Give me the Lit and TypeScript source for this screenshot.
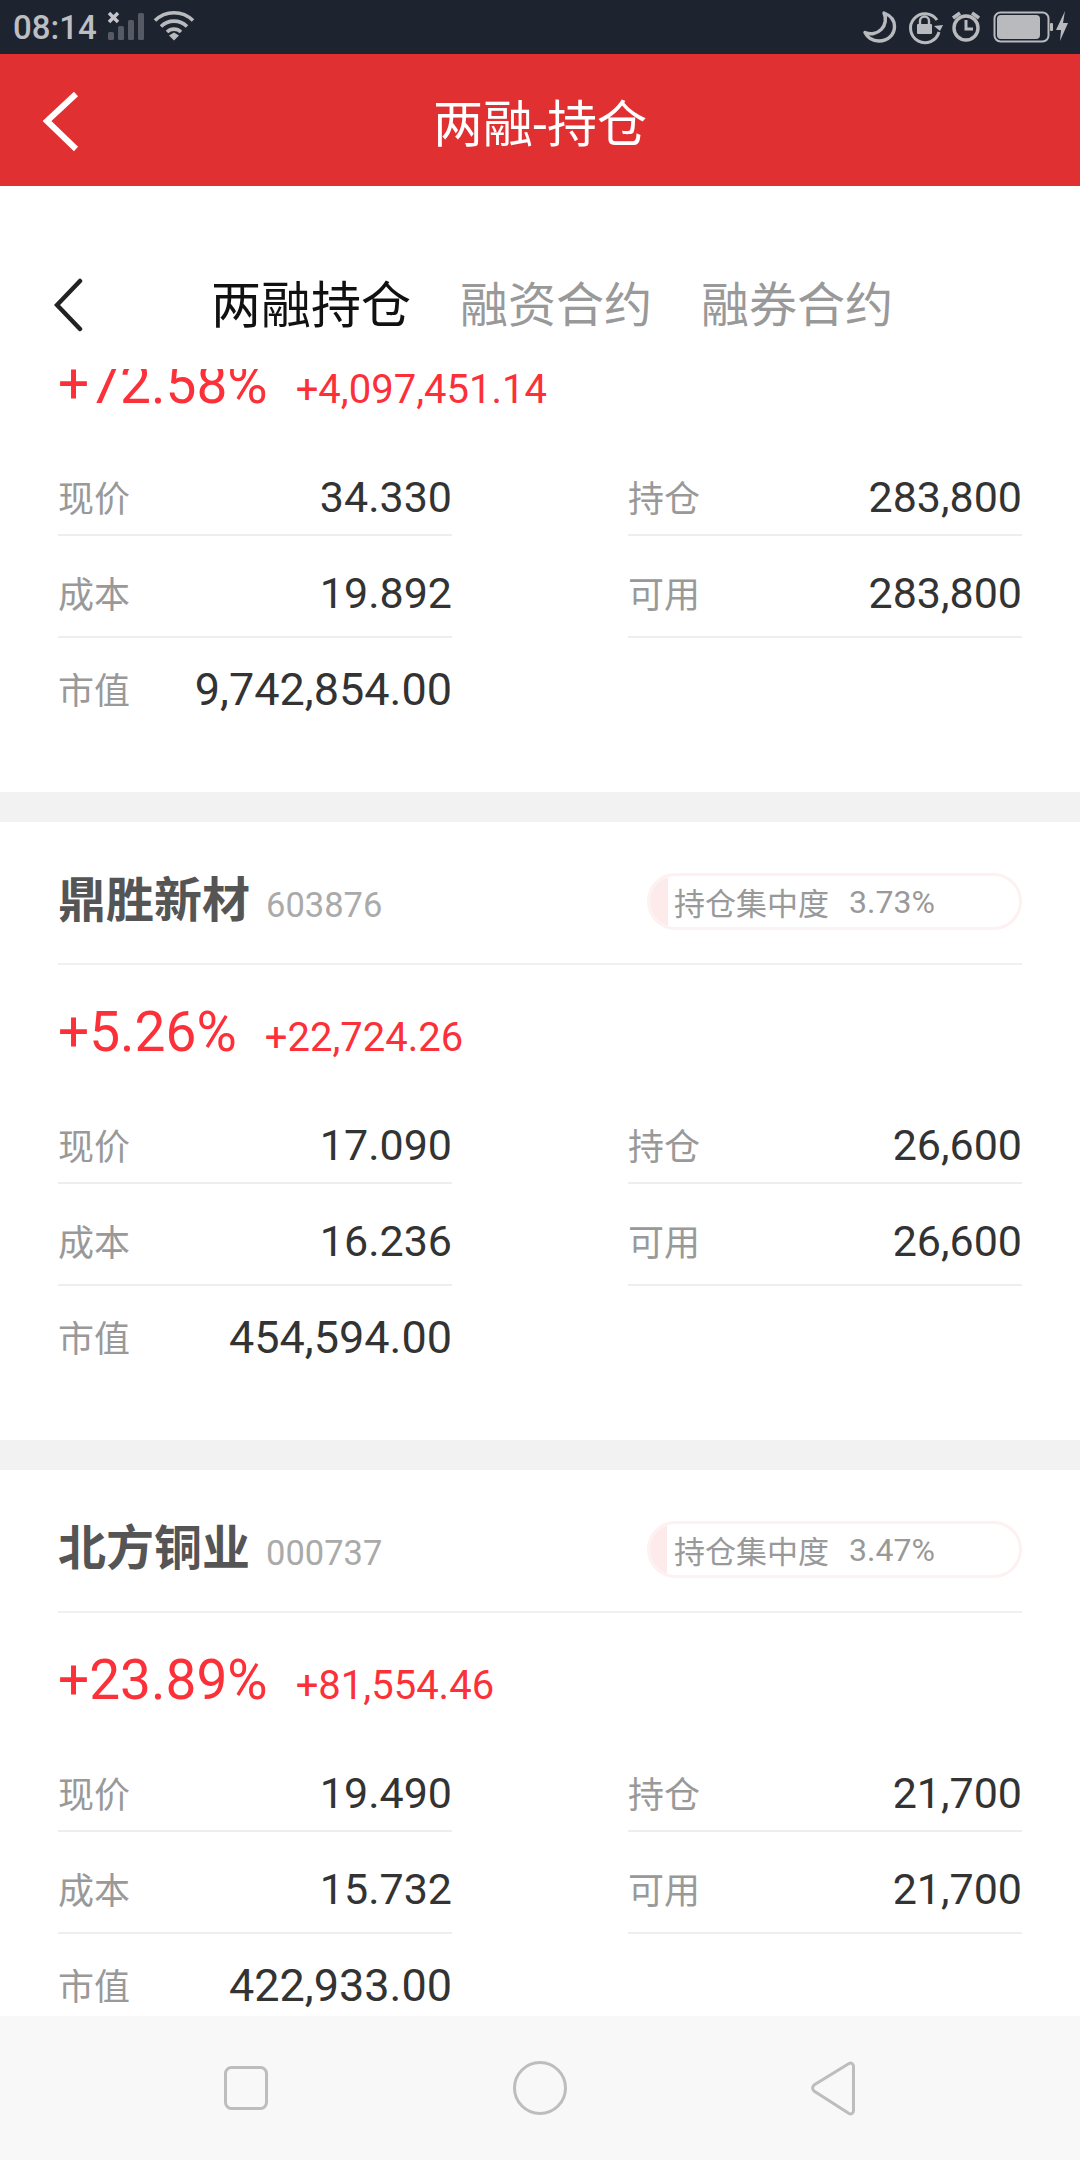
import { LitElement, html, css, svg } from 'lit';
import { customElement } from 'lit/decorators.js';

interface Stock {
  name?: string;
  code?: string;
  share?: string;
  pct: string;
  amount: string;
  price: string;
  cost: string;
  value: string;
  hold: string;
  avail: string;
}

const stocks: Stock[] = [
  { pct: '+72.58%', amount: '+4,097,451.14', price: '34.330', cost: '19.892', value: '9,742,854.00', hold: '283,800', avail: '283,800' },
  { name: '鼎胜新材', code: '603876', share: '3.73%', pct: '+5.26%', amount: '+22,724.26', price: '17.090', cost: '16.236', value: '454,594.00', hold: '26,600', avail: '26,600' },
  { name: '北方铜业', code: '000737', share: '3.47%', pct: '+23.89%', amount: '+81,554.46', price: '19.490', cost: '15.732', value: '422,933.00', hold: '21,700', avail: '21,700' },
];

const statusLeft = svg`
  <path d="M109 13l9 9M118 13l-9 9" stroke="#c4c5c9" stroke-width="3.5" fill="none"/>
  <rect x="108" y="32" width="6" height="8" rx="1.5" fill="#555a64"/>
  <rect x="118" y="26" width="6" height="14" rx="1.5" fill="#555a64"/>
  <rect x="128" y="20" width="6" height="20" rx="1.5" fill="#555a64"/>
  <rect x="138" y="13" width="6" height="27" rx="1.5" fill="#555a64"/>
  <g fill="none" stroke="#b9babd" stroke-width="3.6">
    <path d="M155 20.5a27 27 0 0 1 38 0"/>
    <path d="M161 26.5a18.500 18.500 0 0 1 26 0"/>
    <path d="M167 32a10 10 0 0 1 14 0"/>
  </g>
  <path d="M169 35.500l5-3 5 3-5 5z" fill="#b9babd"/>
`;

const statusRight = svg`
  <path d="M884 13a14.500 14.500 0 0 1-19 19.500a15.500 15.500 0 0 0 14 8.500c9 0 15.500-6.500 15.500-14.500c0-6-4-11-10.500-13.500z" fill="none" stroke="#b9babd" stroke-width="3.400" stroke-linejoin="round"/>
  <path d="M937 20a14.500 14.500 0 1 0 2 12" fill="none" stroke="#b9babd" stroke-width="3"/>
  <path d="M934 26l6 5 3-6z" fill="#b9babd"/>
  <rect x="917" y="24" width="15" height="10" rx="1" fill="#b9babd"/>
  <path d="M920 24v-3a4.500 4.500 0 0 1 9 0v3" fill="none" stroke="#b9babd" stroke-width="2.400"/>
  <circle cx="966" cy="28" r="12" fill="none" stroke="#b9babd" stroke-width="3.400"/>
  <path d="M966 20v9h7" fill="none" stroke="#b9babd" stroke-width="3"/>
  <path d="M953 18l7-5M979 18l-7-5" fill="none" stroke="#b9babd" stroke-width="3.600"/>
  <rect x="994.500" y="12.500" width="54" height="29" rx="6" fill="none" stroke="#b9babd" stroke-width="2"/>
  <rect x="997" y="15" width="43" height="24" rx="4" fill="#b9babd"/>
  <rect x="1050" y="23" width="3" height="8" rx="1" fill="#b9babd"/>
  <path d="M1065 11l-9 19h5l-1 11l8-18h-5z" fill="#b9babd"/>
`;

@customElement('stock-card')
class StockCard extends LitElement {
  static properties = {
    stock: { type: Object },
    first: { type: Boolean },
  };

  declare stock: Stock;
  declare first: boolean;

  static styles = css`
    :host {
      display: block;
      background: #fff;
      padding: 0 58px;
      height: 618px;
      overflow: hidden;
      font-family: Roboto, 'Noto Sans CJK SC', sans-serif;
    }

    :host([first]) {
      height: 423px;
    }

    .head {
      height: 143px;
      box-sizing: border-box;
      border-bottom: 2px solid #f0f0f0;
      display: flex;
      align-items: center;
      padding-top: 18px;
    }

    .title {
      flex: 1;
      display: flex;
      align-items: baseline;
      padding-bottom: 12px;
    }

    .name {
      font-size: 48px;
      font-weight: 700;
      color: #555;
    }

    .code {
      font-size: 34.5px;
      color: #aaa;
      margin-left: 16px;
    }

    .badge {
      position: relative;
      width: 375px;
      height: 57px;
      box-sizing: border-box;
      border: 3px solid #fdf1f1;
      border-radius: 29px;
      overflow: hidden;
      display: flex;
      align-items: center;
      padding-left: 24px;
      color: #999;
      font-size: 31px;
    }

    .fill {
      position: absolute;
      left: 0;
      top: 0;
      bottom: 0;
      background: #fdeaea;
    }

    .badge span {
      position: relative;
    }

    .badge .share {
      margin-left: 20px;
      font-size: 32px;
    }

    .gain {
      height: 117px;
      box-sizing: border-box;
      padding-top: 35px;
      display: flex;
      align-items: baseline;
      line-height: 64px;
      color: #fc3038;
    }

    .first .gain {
      margin-top: -52px;
    }

    .pct {
      font-size: 55px;
      margin-right: 28px;
    }

    .amount {
      font-size: 40px;
    }

    .grid {
      display: grid;
      grid-template-columns: 394px 394px;
      justify-content: space-between;
    }

    .row {
      display: flex;
      justify-content: space-between;
      align-items: center;
      height: 102px;
      box-sizing: border-box;
    }

    .r0 {
      padding-top: 26px;
      border-bottom: 2px solid #eee;
    }

    .r1 {
      padding-top: 14px;
      border-bottom: 2px solid #eee;
    }

    .label {
      font-size: 36px;
      color: #999;
      padding-bottom: 3px;
    }

    .val {
      font-size: 43px;
      color: #333;
    }

    .r2 .val {
      font-size: 45px;
    }
  `;

  row(label: string, val: string, r: number) {
    return html`<div class="row r${r}">
      <span class="label">${label}</span><span class="val">${val}</span>
    </div>`;
  }

  render() {
    const s = this.stock;
    return html`
      <div class=${this.first ? 'first' : ''}>
        ${s.name
          ? html`<div class="head">
              <div class="title">
                <span class="name">${s.name}</span>
                <span class="code">${s.code}</span>
              </div>
              <div class="badge">
                <div class="fill" style="width:${parseFloat(s.share!) * 4.8}px"></div>
                <span>持仓集中度</span><span class="share">${s.share}</span>
              </div>
            </div>`
          : ''}
        <div class="gain">
          <span class="pct">${s.pct}</span><span class="amount">${s.amount}</span>
        </div>
        <div class="grid">
          ${this.row('现价', s.price, 0)} ${this.row('持仓', s.hold, 0)}
          ${this.row('成本', s.cost, 1)} ${this.row('可用', s.avail, 1)}
          ${this.row('市值', s.value, 2)}
        </div>
      </div>
    `;
  }
}

@customElement('app-root')
export class AppRoot extends LitElement {
  static styles = css`
    :host {
      display: flex;
      flex-direction: column;
      width: 1080px;
      height: 2160px;
      overflow: hidden;
      background: #fff;
      font-family: Roboto, 'Noto Sans CJK SC', sans-serif;
    }

    .status {
      position: relative;
      height: 54px;
      flex: none;
      background: #1e2330;
      color: #bdbec1;
      font-size: 33px;
      font-weight: 500;
      line-height: 56px;
      padding-left: 13px;
    }

    .status svg {
      position: absolute;
      left: 0;
      top: 0;
    }

    .bar {
      position: relative;
      height: 132px;
      flex: none;
      background: #e03032;
      color: #fff;
      font-size: 50px;
      display: flex;
      align-items: center;
      justify-content: center;
    }

    .bar svg {
      position: absolute;
      left: 40px;
      top: 36px;
    }

    .tabs {
      height: 183px;
      flex: none;
      background: #fff;
      display: flex;
      align-items: center;
      padding: 46px 0 0 211px;
      box-sizing: border-box;
      gap: 49px;
      position: relative;
      z-index: 1;
      font-size: 48px;
      color: #999;
    }

    .tabs .on {
      color: #111;
      font-size: 50px;
    }

    .tabs svg {
      position: absolute;
      left: 54px;
      top: 92px;
    }

    .list {
      flex: 1;
      min-height: 0;
      overflow: hidden;
      display: flex;
      flex-direction: column;
      gap: 30px;
      background: #f2f2f2;
    }

    .list stock-card {
      flex: none;
    }

    .nav {
      height: 144px;
      flex: none;
      background: #f8f8f8;
      display: flex;
    }
  `;

  render() {
    return html`
      <div class="status">
        08:14
        <svg width="1080" height="54" viewBox="0 0 1080 54">${statusLeft}${statusRight}</svg>
      </div>
      <div class="bar">
        <svg width="44" height="64" viewBox="0 0 44 64">
          <path d="M36 4L7 31l29 28" fill="none" stroke="#fff" stroke-width="6"/>
        </svg>
        两融-持仓
      </div>
      <div class="tabs">
        <svg width="32" height="56" viewBox="0 0 32 56">
          <path d="M26 3L3 27l23 24" fill="none" stroke="#222" stroke-width="4.500" stroke-linecap="round"/>
        </svg>
        <span class="on">两融持仓</span><span>融资合约</span><span>融券合约</span>
      </div>
      <div class="list">
        ${stocks.map(
          (s, i) => html`<stock-card .stock=${s} ?first=${i === 0}></stock-card>`
        )}
      </div>
      <div class="nav">
        <svg width="1080" height="144" viewBox="0 0 1080 144">
          <rect x="225.500" y="51.500" width="41" height="41" rx="6" fill="none" stroke="#bdbdbd" stroke-width="3"/>
          <circle cx="540" cy="72" r="25.500" fill="none" stroke="#bdbdbd" stroke-width="3"/>
          <path d="M849 47.500L814 69a4 4 0 0 0 0 6l35 22.500c2 1 4.500 0 4.500-3V50.500c0-3-2.500-4-4.500-3z" fill="none" stroke="#bdbdbd" stroke-width="3"/>
        </svg>
      </div>
    `;
  }
}
